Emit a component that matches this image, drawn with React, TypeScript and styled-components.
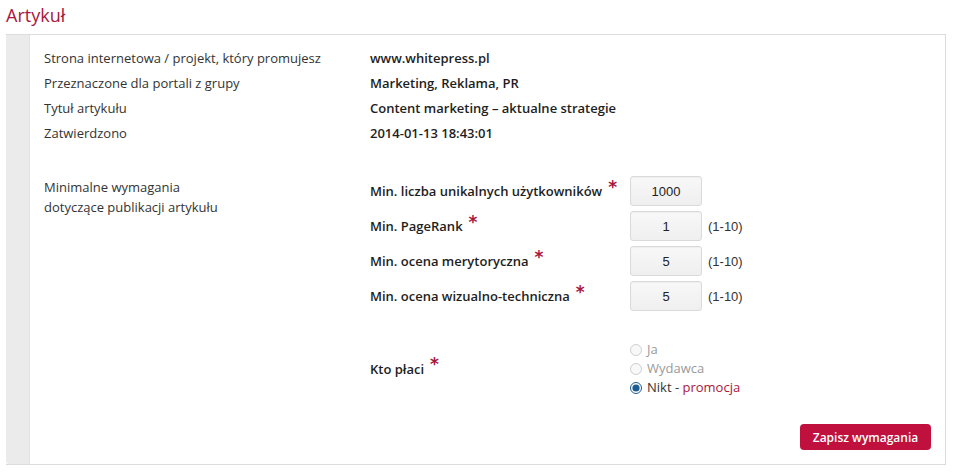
import React from "react";
import styled, { createGlobalStyle } from "styled-components";

const GlobalStyle = createGlobalStyle`
  html, body {
    margin: 0;
    padding: 0;
    background: #ffffff;
  }
  body {
    font-family: "Open Sans", "Liberation Sans", Arial, sans-serif;
    font-size: 13px;
    color: #333;
  }
`;

const Page = styled.div`
  padding: 0 10px 0 6px;
  width: 956px;
  box-sizing: border-box;
`;

const Title = styled.h1`
  margin: 0;
  height: 34px;
  font-size: 18px;
  font-weight: 400;
  line-height: 30px;
  color: #a8173e;
`;

const Card = styled.div`
  display: flex;
  border: 1px solid #dcdcdc;
  border-left: none;
  height: 431px;
  box-sizing: border-box;
`;

const Strip = styled.div`
  width: 23px;
  flex: none;
  background: #ebebeb;
  border-right: 1px solid #e2e2e2;
  border-radius: 0 0 0 3px;
`;

const Body = styled.div`
  flex: 1;
  display: flex;
  flex-direction: column;
  padding: 11px 14px 14px 14px;
`;

const InfoGrid = styled.div`
  display: grid;
  grid-template-columns: 326px 1fr;
  line-height: 25px;
`;

const Label = styled.div`
  color: #333;
`;

const Value = styled.div`
  font-weight: 600;
  color: #1e1e1e;
`;

const Section = styled.div<{ $top: number }>`
  display: grid;
  grid-template-columns: 326px 1fr;
  margin-top: ${(p) => p.$top}px;
`;

const SectionLabel = styled.div`
  line-height: 20px;
  padding-top: 1px;
`;

const ReqList = styled.div`
  display: flex;
  flex-direction: column;
  gap: 5px;
`;

const ReqRow = styled.div`
  display: flex;
  align-items: center;
`;

const ReqLabel = styled.div`
  width: 260px;
  flex: none;
  font-weight: 600;
  color: #1e1e1e;
  display: flex;
  align-items: center;
`;

const Star = styled.span`
  color: #a8173e;
  font-family: "DejaVu Sans", sans-serif;
  font-size: 17px;
  font-weight: 700;
  margin-left: 6px;
  position: relative;
  top: -4px;
  line-height: 1;
`;

const NumberInput = styled.div`
  width: 72px;
  height: 30px;
  box-sizing: border-box;
  border: 1px solid #dadada;
  border-radius: 3px;
  background: linear-gradient(#f8f8f8, #efefef);
  box-shadow: inset 0 1px 1px rgba(0, 0, 0, 0.04);
  display: flex;
  align-items: center;
  justify-content: center;
  font-family: "Liberation Sans", Arial, sans-serif;
  font-size: 13px;
  color: #222;
`;

const Hint = styled.span`
  margin-left: 6px;
  font-family: "Liberation Sans", Arial, sans-serif;
  font-size: 13px;
  color: #333;
`;

const PayRow = styled.div`
  display: flex;
  align-items: center;
`;

const RadioGroup = styled.div`
  display: flex;
  flex-direction: column;
  line-height: 19px;
`;

const RadioLine = styled.label<{ $disabled?: boolean }>`
  display: flex;
  align-items: center;
  gap: 5px;
  color: ${(p) => (p.$disabled ? "#9a9a9a" : "#333")};
`;

const Radio = styled.input`
  margin: 0;
  width: 12px;
  height: 12px;
  accent-color: #1d5c93;
`;

const PromoLink = styled.a`
  color: #a8173e;
  text-decoration: none;
`;

const Footer = styled.div`
  margin-top: auto;
  display: flex;
  justify-content: flex-end;
`;

const SaveButton = styled.button`
  height: 26px;
  width: 131px;
  padding: 0;
  border: none;
  border-radius: 4px;
  background: #c0103e;
  color: #fff;
  font-family: "Open Sans", "Liberation Sans", Arial, sans-serif;
  font-size: 12px;
  font-weight: 600;
  cursor: pointer;
`;

const info = [
  ["Strona internetowa / projekt, który promujesz", "www.whitepress.pl"],
  ["Przeznaczone dla portali z grupy", "Marketing, Reklama, PR"],
  ["Tytuł artykułu", "Content marketing – aktualne strategie"],
  ["Zatwierdzono", "2014-01-13 18:43:01"],
];

const reqs = [
  { label: "Min. liczba unikalnych użytkowników", value: "1000", hint: "" },
  { label: "Min. PageRank", value: "1", hint: "(1-10)" },
  { label: "Min. ocena merytoryczna", value: "5", hint: "(1-10)" },
  { label: "Min. ocena wizualno-techniczna", value: "5", hint: "(1-10)" },
];

export default function App() {
  return (
    <Page>
      <GlobalStyle />
      <Title>Artykuł</Title>
      <Card>
        <Strip />
        <Body>
          <InfoGrid>
            {info.map(([l, v]) => (
              <React.Fragment key={l}>
                <Label>{l}</Label>
                <Value>{v}</Value>
              </React.Fragment>
            ))}
          </InfoGrid>
          <Section $top={30}>
            <SectionLabel>
              Minimalne wymagania
              <br />
              dotyczące publikacji artykułu
            </SectionLabel>
            <ReqList>
              {reqs.map((r) => (
                <ReqRow key={r.label}>
                  <ReqLabel>
                    {r.label}
                    <Star>*</Star>
                  </ReqLabel>
                  <NumberInput>{r.value}</NumberInput>
                  {r.hint && <Hint>{r.hint}</Hint>}
                </ReqRow>
              ))}
            </ReqList>
          </Section>
          <Section $top={29}>
            <div />
            <PayRow>
              <ReqLabel>
                Kto płaci
                <Star>*</Star>
              </ReqLabel>
              <RadioGroup>
                <RadioLine $disabled>
                  <Radio type="radio" name="payer" disabled />
                  Ja
                </RadioLine>
                <RadioLine $disabled>
                  <Radio type="radio" name="payer" disabled />
                  Wydawca
                </RadioLine>
                <RadioLine>
                  <Radio type="radio" name="payer" defaultChecked />
                  <span>
                    Nikt - <PromoLink href="#">promocja</PromoLink>
                  </span>
                </RadioLine>
              </RadioGroup>
            </PayRow>
          </Section>
          <Footer>
            <SaveButton>Zapisz wymagania</SaveButton>
          </Footer>
        </Body>
      </Card>
    </Page>
  );
}
